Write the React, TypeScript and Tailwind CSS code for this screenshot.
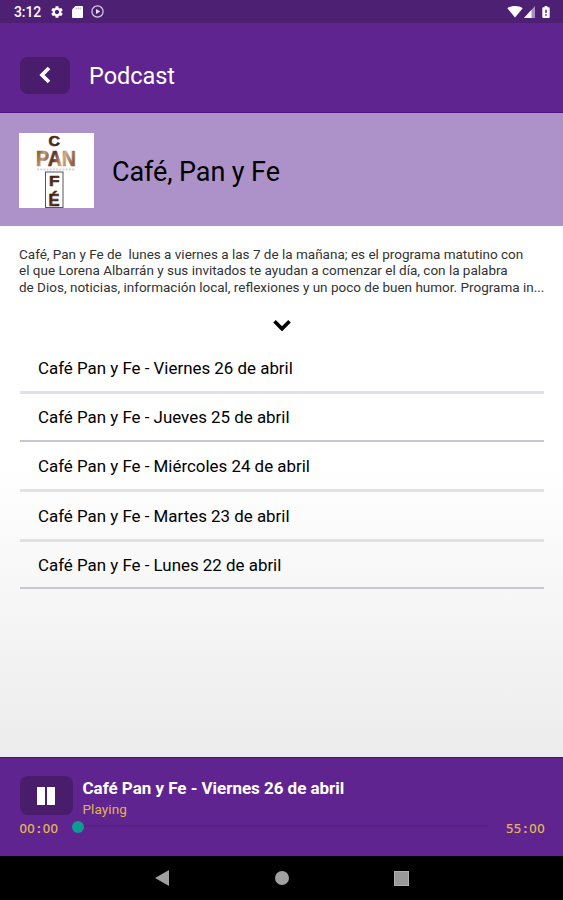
import type { ReactNode } from "react";

interface Episode {
  title: string;
  row: string;
}

const episodes: Episode[] = [
  { title: "Café Pan y Fe - Viernes 26 de abril", row: "h-[49px] border-b-3 border-[#e2e0e9] pt-[2px]" },
  { title: "Café Pan y Fe - Jueves 25 de abril", row: "h-[48px] border-b-2 border-[#c8c5d9] pt-[1px]" },
  { title: "Café Pan y Fe - Miércoles 24 de abril", row: "h-[50px] border-b-3 border-[#e2e1e6] pt-[3px]" },
  { title: "Café Pan y Fe - Martes 23 de abril", row: "h-[50px] border-b-3 border-[#e2e1e5] pt-[2px]" },
  { title: "Café Pan y Fe - Lunes 22 de abril", row: "h-[47px] border-b-2 border-[#c9c7d4] pt-[3px]" },
];

const description = [
  "Café, Pan y Fe de  lunes a viernes a las 7 de la mañana; es el programa matutino con",
  "el que Lorena Albarrán y sus invitados te ayudan a comenzar el día, con la palabra",
  "de Dios, noticias, información local, reflexiones y un poco de buen humor. Programa in...",
];

function StatusBar() {
  return (
    <div className="flex h-[23px] shrink-0 items-center bg-[#4e2074] pl-[14px] pr-[13px] text-white">
      <span className="w-[37px] text-[14px] font-medium leading-none tracking-[-0.1px]">3:12</span>
      <svg width="12" height="12" viewBox="2 2 20 20" fill="currentColor">
        <path d="M19.14 12.94c.04-.3.06-.61.06-.94s-.02-.64-.07-.94l2.03-1.58c.18-.14.23-.41.12-.61l-1.92-3.32c-.12-.22-.37-.29-.59-.22l-2.39.96c-.5-.38-1.03-.7-1.62-.94l-.36-2.54c-.04-.24-.24-.41-.48-.41h-3.84c-.24 0-.43.17-.47.41l-.36 2.54c-.59.24-1.13.57-1.62.94l-2.39-.96c-.22-.08-.47 0-.59.22L2.74 8.87c-.12.21-.08.47.12.61l2.03 1.58c-.05.3-.09.63-.09.94s.02.64.07.94l-2.03 1.58c-.18.14-.23.41-.12.61l1.92 3.32c.12.22.37.29.59.22l2.39-.96c.5.38 1.03.7 1.62.94l.36 2.54c.05.24.24.41.48.41h3.84c.24 0 .44-.17.47-.41l.36-2.54c.59-.24 1.13-.56 1.62-.94l2.39.96c.22.08.47 0 .59-.22l1.92-3.32c.12-.22.07-.47-.12-.61l-2.01-1.58zM12 15.6c-1.98 0-3.6-1.62-3.6-3.6s1.62-3.6 3.6-3.6 3.6 1.62 3.6 3.6-1.62 3.6-3.6 3.6z" />
      </svg>
      <svg className="ml-[9px]" width="11" height="12" viewBox="0 0 11 12">
        <path d="M3.5 0H10a1 1 0 0 1 1 1v10a1 1 0 0 1-1 1H1a1 1 0 0 1-1-1V3.5z" fill="#fff" />
        <path d="M4.2 1.5v2M6.2 1.5v2M8.2 1.5v2" stroke="#a78dbd" strokeWidth="0.8" />
      </svg>
      <svg className="ml-[8px]" width="13" height="13" viewBox="0 0 13 13" fill="none">
        <circle cx="6.5" cy="6.5" r="5.6" stroke="#dccfe6" strokeWidth="1.2" />
        <path d="M5 3.9v5.2L9.2 6.5z" fill="#eee6f3" />
      </svg>
      <svg className="ml-auto" width="16" height="13" viewBox="0 0 16 13">
        <path d="M8 12.5.3 3.2C4.3.2 11.7.2 15.7 3.2z" fill="#fff" />
      </svg>
      <svg className="ml-[1px]" width="11" height="12" viewBox="0 0 11 12">
        <path d="M11 0v12H0z" fill="#a98fbe" />
        <path d="M7.5 3.8V12H0z" fill="#fff" />
      </svg>
      <svg className="ml-[7px]" width="8" height="12" viewBox="0 0 8 13">
        <path d="M2.5 0h3v1.3H7a1 1 0 0 1 1 1V12a1 1 0 0 1-1 1H1a1 1 0 0 1-1-1V2.3a1 1 0 0 1 1-1h1.5z" fill="#fff" />
        <path d="M4 4v3.5M4 9v1.5" stroke="#4e2074" strokeWidth="1.6" />
      </svg>
    </div>
  );
}

function ProgramLogo() {
  return (
    <svg className="mr-[18px] h-[75px] w-[75px] bg-white" viewBox="0 0 75 75">
      <defs>
        <linearGradient id="coffee" x1="0" y1="0" x2="1" y2="1">
          <stop offset="0" stopColor="#1c0c08" />
          <stop offset="0.5" stopColor="#5e3020" />
          <stop offset="1" stopColor="#1b0b08" />
        </linearGradient>
        <linearGradient id="bread" x1="0" y1="0" x2="1" y2="0.2">
          <stop offset="0" stopColor="#6b3418" />
          <stop offset="0.25" stopColor="#c49a79" />
          <stop offset="0.5" stopColor="#5e2f1e" />
          <stop offset="0.75" stopColor="#d0ad8c" />
          <stop offset="1" stopColor="#93633f" />
        </linearGradient>
      </defs>
      <g fontFamily="'Liberation Sans', Arial, sans-serif" fontWeight="700" strokeWidth="0.6">
        <text x="29.5" y="13" fontSize="15.5" textLength="11.5" lengthAdjust="spacingAndGlyphs" fill="url(#coffee)" stroke="url(#coffee)">C</text>
        <text x="17" y="33" fontSize="21.5" textLength="40" lengthAdjust="spacingAndGlyphs" fill="url(#bread)" stroke="url(#bread)">PAN</text>
        <text x="30" y="53" fontSize="15.5" textLength="10.5" lengthAdjust="spacingAndGlyphs" fill="url(#coffee)" stroke="url(#coffee)">F</text>
        <text x="29.5" y="72.5" fontSize="16" textLength="11" lengthAdjust="spacingAndGlyphs" fill="url(#coffee)" stroke="url(#coffee)">É</text>
      </g>
      <path d="M18 36.5h38" stroke="#aaa" strokeWidth="1.8" strokeDasharray="2 1.2" opacity="0.5" />
      <rect x="26.5" y="39" width="17.5" height="35.5" fill="none" stroke="#555" strokeWidth="1" />
    </svg>
  );
}

function Time({ min, sec }: { min: string; sec: string }) {
  return (
    <span className="whitespace-nowrap font-['Noto_Sans',sans-serif] text-[13px] font-medium leading-none tracking-[0.4px] text-[#e3b654]">
      {min}
      <span className="inline-block w-[7.6px] text-center font-bold">:</span>
      {sec}
    </span>
  );
}

function DarkButton({ className, label, children }: { className: string; label: string; children: ReactNode }) {
  return (
    <button aria-label={label} className={`flex items-center justify-center rounded-[8px] bg-[#491d6b] ${className}`}>
      {children}
    </button>
  );
}

function Player() {
  return (
    <footer className="h-[99px] shrink-0 border-t border-[#4b0b80] bg-[#5f2490] pt-[18px]">
      <div className="flex h-[39px] pl-[20px]">
        <DarkButton className="h-[39px] w-[53px] pr-[1px]" label="Pausa">
          <svg width="18" height="18" viewBox="0 0 18 18" fill="#fff">
            <path d="M0 0h8v18H0zM10 0h8v18h-8z" />
          </svg>
        </DarkButton>
        <div className="pl-[9.5px]">
          <p className="whitespace-nowrap pt-[2px] text-[17px] font-bold leading-[20px] tracking-[-0.03px] text-white">
            Café Pan y Fe - Viernes 26 de abril
          </p>
          <p className="pt-px text-[13.5px] leading-[20px] tracking-[0.1px] text-[#e3b44e]">Playing</p>
        </div>
      </div>
      <div className="flex h-[26px] items-center pl-[19.5px] pr-[18px]">
        <Time min="00" sec="00" />
        <div className="mb-[3px] ml-[14px] mr-[18px] flex flex-1 items-center">
          <span className="h-[12px] w-[12px] shrink-0 rounded-full bg-[#0c9c91]" />
          <span className="mb-px h-[2px] flex-1 bg-[#572183]" />
        </div>
        <Time min="55" sec="00" />
      </div>
    </footer>
  );
}

function NavigationBar() {
  return (
    <nav className="flex h-[44px] shrink-0 items-center bg-black text-[#a0a0a0]">
      <svg className="ml-[154.5px]" width="14" height="16" viewBox="0 0 14 16" fill="currentColor">
        <path d="M14 0v16L0 8z" />
      </svg>
      <span className="ml-[106.5px] h-[14px] w-[14px] rounded-full bg-[#a0a0a0]" />
      <span className="ml-[105px] h-[15px] w-[15px] border border-[#b0b0b0] bg-[#999]" />
    </nav>
  );
}

export default function App() {
  return (
    <div className="flex h-[900px] w-[563px] flex-col overflow-hidden bg-white font-[Roboto,sans-serif] text-black">
      <StatusBar />
      <header className="flex h-[90px] shrink-0 items-center border-b border-[#50157f] bg-[#5f2490] pl-[20px] pt-[15px]">
        <DarkButton className="h-[37px] w-[50px]" label="Volver">
          <svg width="12" height="18" viewBox="0 0 12 18" fill="none">
            <path d="M10 2 3 9l7 7" stroke="#fff" strokeWidth="3.7" />
          </svg>
        </DarkButton>
        <h1 className="pl-[19px] pt-[4px] text-[23.5px] leading-none tracking-[-0.05px] text-white">Podcast</h1>
      </header>
      <section className="flex h-[113px] shrink-0 items-center bg-[#ad92c9] pl-[19px] pt-px">
        <ProgramLogo />
        <h2 className="pt-[4px] text-[27px] leading-none tracking-[-0.1px]">Café, Pan y Fe</h2>
      </section>
      <main className="flex min-h-0 flex-1 flex-col bg-linear-to-b from-white from-45% to-[#ececec] px-[19px] pt-[20px]">
        <div className="text-[13.5px] leading-[16.3px] text-[#333]">
          {description.map((line) => (
            <p key={line} className="whitespace-pre">
              {line}
            </p>
          ))}
        </div>
        <svg className="ml-[254px] mt-[24px]" width="18" height="12" viewBox="0 0 18 12" fill="none">
          <path d="m1.5 2.300 7.5 7.500L16.5 2.300" stroke="#000" strokeWidth="3.7" />
        </svg>
        <ul className="mt-[14px]">
          {episodes.map((episode) => (
            <li key={episode.title} className={`ml-px flex items-center pl-[18px] text-[16.9px] ${episode.row}`}>
              {episode.title}
            </li>
          ))}
        </ul>
      </main>
      <Player />
      <NavigationBar />
    </div>
  );
}
